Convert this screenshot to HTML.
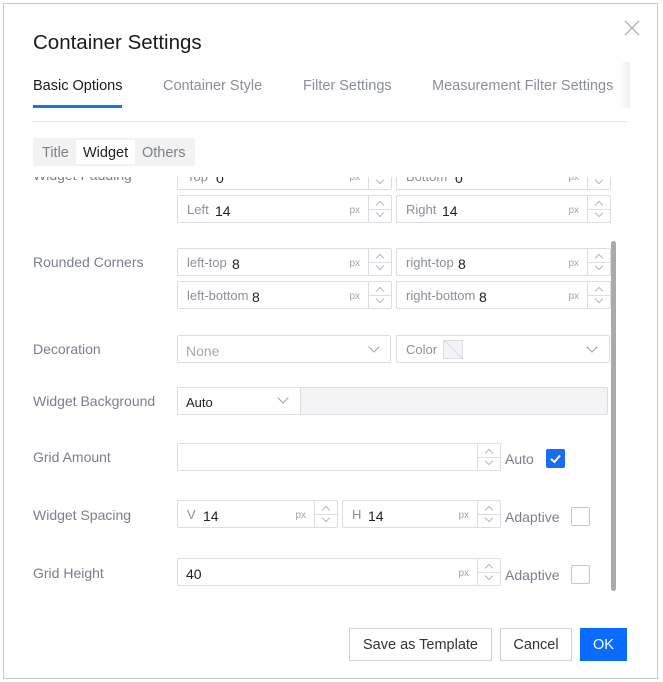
<!DOCTYPE html>
<html><head><meta charset="utf-8"><style>
*{box-sizing:border-box;margin:0;padding:0}
body{width:663px;height:682px;background:#fff;font-family:"Liberation Sans",sans-serif;position:relative;overflow:hidden}
.a{position:absolute}
.frame{left:3px;top:3px;width:655px;height:676px;border:1px solid #c8c8c8}
.lbl{position:absolute;left:33px;font-size:14px;color:#7a7f8c}
.in{position:absolute;height:28px;border:1px solid #dcdde3;border-radius:2px;background:#fff;font-size:14px}
.in .p{position:absolute;left:9px;top:6px;font-size:13px;color:#8a8f99}
.in .v{position:absolute;top:7px;font-size:14px;color:#222}
.in .px{position:absolute;right:31px;top:9px;font-size:10px;color:#a0a4ad}
.in .st{position:absolute;right:0;top:0;width:23px;height:26px;border-left:1px solid #dcdde3}
.in .st:after{content:"";position:absolute;left:0;right:0;top:13px;border-top:1px solid #dcdde3}
.in .st i{position:absolute;left:8px;width:6px;height:6px;border-left:1px solid #b5b8c0;border-top:1px solid #b5b8c0}
.in .st i.u{top:6px;transform:rotate(45deg)}
.in .st i.d{top:14px;transform:rotate(225deg)}
.chev{position:absolute;width:8px;height:8px;border-right:1px solid #9a9ea8;border-bottom:1px solid #9a9ea8;transform:rotate(45deg)}
.cb{position:absolute;width:19px;height:19px;border:1px solid #c5c7cf;border-radius:2px;background:#fff}
.btn{position:absolute;top:628px;height:33px;border:1px solid #d0d2d8;font-size:14.5px;color:#333;text-align:center;line-height:33px;background:#fff}
.tab{position:absolute;top:78px;font-size:14.5px;color:#8a8f99}
</style></head><body>
<div class="a frame"></div>
<div class="a" style="left:33px;top:31px;font-size:20.5px;color:#1a1a1a">Container Settings</div>
<svg class="a" style="left:624px;top:20px" width="16" height="16"><path d="M1 1L15 15M15 1L1 15" stroke="#b5b8c0" stroke-width="1.5"/></svg>
<div class="tab" style="left:33px;color:#1a1a1a">Basic Options</div>
<div class="tab" style="left:163px">Container Style</div>
<div class="tab" style="left:303px">Filter Settings</div>
<div class="tab" style="left:432px">Measurement Filter Settings</div>
<div class="a" style="left:620px;top:62px;width:10px;height:46px;background:linear-gradient(90deg,#fff,#eee)"></div>
<div class="a" style="left:33px;top:105px;width:89px;height:3px;background:#1a73e8"></div>
<div class="a" style="left:33px;top:121px;width:594px;height:1px;background:#e6e7eb"></div>
<div class="a" style="left:33px;top:138px;width:162px;height:28px;background:#f2f2f3;border-radius:2px"></div>
<div class="a" style="left:76px;top:140px;width:59px;height:24px;background:#fff"></div>
<div class="a" style="left:42px;top:145px;font-size:14.5px;color:#7a7f8c">Title</div>
<div class="a" style="left:83px;top:145px;font-size:14.5px;color:#222">Widget</div>
<div class="a" style="left:142px;top:145px;font-size:14.5px;color:#7a7f8c">Others</div>

<div class="a" style="left:0;top:177px;width:663px;height:417px;overflow:hidden">
 <div class="a" style="left:0;top:-177px;width:663px;height:700px">
  <div class="lbl" style="top:167px">Widget Padding</div>
  <div class="in" style="left:177px;top:162px;width:215px"><span class="p">Top</span><span class="v" style="left:38px">0</span><span class="px">px</span><span class="st"><i class="u"></i><i class="d"></i></span></div>
  <div class="in" style="left:396px;top:162px;width:215px"><span class="p">Bottom</span><span class="v" style="left:58px">0</span><span class="px">px</span><span class="st"><i class="u"></i><i class="d"></i></span></div>
  <div class="in" style="left:177px;top:195px;width:215px"><span class="p">Left</span><span class="v" style="left:37px">14</span><span class="px">px</span><span class="st"><i class="u"></i><i class="d"></i></span></div>
  <div class="in" style="left:396px;top:195px;width:215px"><span class="p">Right</span><span class="v" style="left:45px">14</span><span class="px">px</span><span class="st"><i class="u"></i><i class="d"></i></span></div>

  <div class="lbl" style="top:254px">Rounded Corners</div>
  <div class="in" style="left:177px;top:248px;width:215px"><span class="p">left-top</span><span class="v" style="left:54px">8</span><span class="px">px</span><span class="st"><i class="u"></i><i class="d"></i></span></div>
  <div class="in" style="left:396px;top:248px;width:215px"><span class="p">right-top</span><span class="v" style="left:61px">8</span><span class="px">px</span><span class="st"><i class="u"></i><i class="d"></i></span></div>
  <div class="in" style="left:177px;top:281px;width:215px"><span class="p">left-bottom</span><span class="v" style="left:74px">8</span><span class="px">px</span><span class="st"><i class="u"></i><i class="d"></i></span></div>
  <div class="in" style="left:396px;top:281px;width:215px"><span class="p">right-bottom</span><span class="v" style="left:82px">8</span><span class="px">px</span><span class="st"><i class="u"></i><i class="d"></i></span></div>

  <div class="lbl" style="top:341px">Decoration</div>
  <div class="in" style="left:177px;top:335px;width:214px"><span class="v" style="left:8px;color:#a5a9b2">None</span><span class="chev" style="left:192px;top:7px"></span></div>
  <div class="in" style="left:396px;top:335px;width:214px"><span class="p" style="top:6px;font-size:13px">Color</span><span class="a" style="left:46px;top:4px;width:20px;height:19px;border:1px solid #dcdde3;background:linear-gradient(45deg,#f3f3f6 49%,#c8cad0 50%,#f3f3f6 53%)"></span><span class="chev" style="left:191px;top:7px"></span></div>

  <div class="lbl" style="top:393px">Widget Background</div>
  <div class="in" style="left:177px;top:387px;width:431px;background:#f4f4f7"></div>
  <div class="in" style="left:177px;top:387px;width:124px"><span class="v" style="left:8px;font-size:13px;top:7px">Auto</span><span class="chev" style="left:101px;top:6px"></span></div>

  <div class="lbl" style="top:449px">Grid Amount</div>
  <div class="in" style="left:177px;top:443px;width:324px"><span class="st"><i class="u"></i><i class="d"></i></span></div>
  <div class="a" style="left:505px;top:451px;font-size:14px;color:#7a7f8c">Auto</div>
  <div class="cb" style="left:546px;top:449px;background:#1a6cf0;border-color:#1a6cf0"><svg width="17" height="17" style="position:absolute;left:0;top:0"><path d="M4 9L7.5 12L13 5.5" stroke="#fff" stroke-width="2" fill="none"/></svg></div>

  <div class="lbl" style="top:507px">Widget Spacing</div>
  <div class="in" style="left:177px;top:500px;width:161px"><span class="p">V</span><span class="v" style="left:25px">14</span><span class="px">px</span><span class="st"><i class="u"></i><i class="d"></i></span></div>
  <div class="in" style="left:342px;top:500px;width:159px"><span class="p">H</span><span class="v" style="left:25px">14</span><span class="px">px</span><span class="st"><i class="u"></i><i class="d"></i></span></div>
  <div class="a" style="left:505px;top:509px;font-size:14px;color:#7a7f8c">Adaptive</div>
  <div class="cb" style="left:571px;top:507px"></div>

  <div class="lbl" style="top:565px">Grid Height</div>
  <div class="in" style="left:177px;top:558px;width:324px"><span class="v" style="left:8px">40</span><span class="px">px</span><span class="st"><i class="u"></i><i class="d"></i></span></div>
  <div class="a" style="left:505px;top:567px;font-size:14px;color:#7a7f8c">Adaptive</div>
  <div class="cb" style="left:571px;top:565px"></div>
 </div>
</div>
<div class="a" style="left:611px;top:241px;width:5px;height:350px;background:#aaa;border-radius:3px"></div>

<div class="btn" style="left:349px;width:143px">Save as Template</div>
<div class="btn" style="left:500px;width:72px">Cancel</div>
<div class="btn" style="left:580px;width:47px;background:#0a6cff;border-color:#0a6cff;color:#fff">OK</div>
</body></html>
